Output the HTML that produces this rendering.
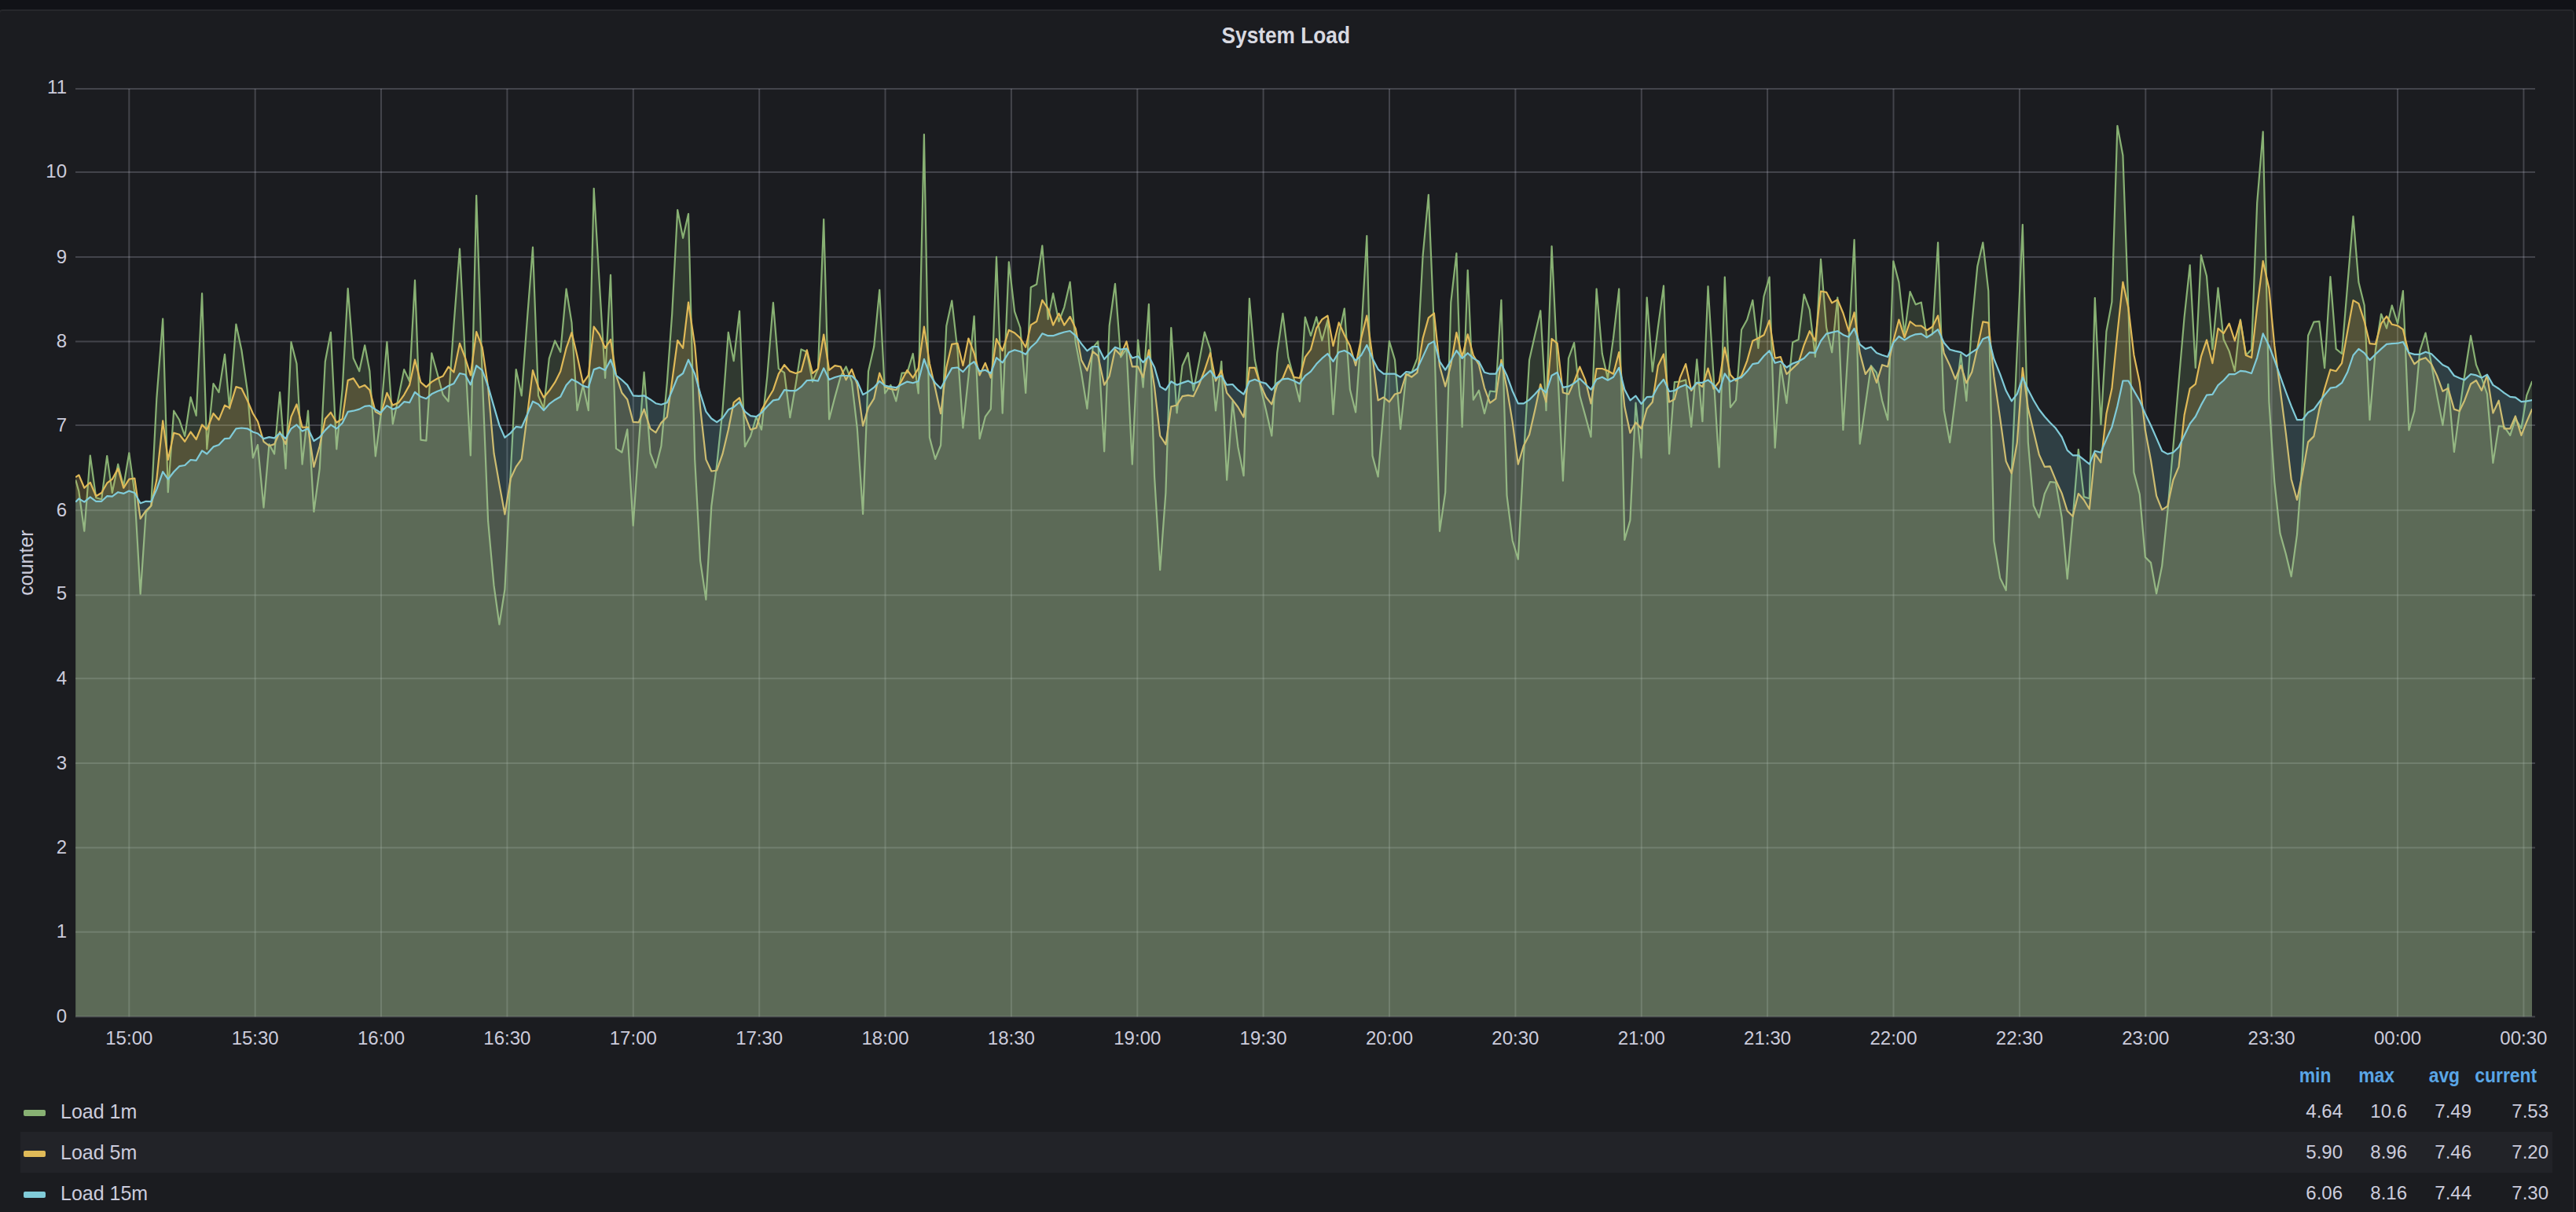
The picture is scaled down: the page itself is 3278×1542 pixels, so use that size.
<!DOCTYPE html><html><head><meta charset="utf-8"><style>
html,body{margin:0;padding:0;width:3278px;height:1542px;overflow:hidden;background:#111217;font-family:"Liberation Sans",sans-serif}
#panel{position:absolute;left:-2px;top:12px;width:3278px;height:1540px;background:#1b1c20;border:2px solid #26272b;box-sizing:border-box;border-radius:5px 5px 0 0;border-bottom:none}
.abs{position:absolute}
#title{position:absolute;left:-3px;width:3278px;top:28px;text-align:center;color:#d8d9e0;font-size:29px;font-weight:bold;line-height:34px}
.yl{position:absolute;left:0;width:85px;text-align:right;color:#ccccdc;font-size:24px;line-height:28px}
.xl{position:absolute;top:1307px;width:120px;text-align:center;color:#ccccdc;font-size:24px;line-height:28px}
#ylab{position:absolute;left:32.5px;top:715.5px;color:#ccccdc;font-size:25px;line-height:28px;transform:translate(-50%,-50%) rotate(-90deg);white-space:nowrap}
.li{position:absolute;left:30px;width:28px;height:8px;border-radius:2px}
.ln{position:absolute;left:77px;height:52px;line-height:52px;color:#ccccdc;font-size:25px;white-space:nowrap}
.lv{position:absolute;width:200px;text-align:right;height:52px;line-height:52px;color:#ccccdc;font-size:24px}
.lh{position:absolute;top:1351px;width:200px;text-align:right;line-height:34px;color:#5aa6e6;font-size:25px;font-weight:bold}
svg{position:absolute;left:0;top:0}
</style></head><body>
<div id="panel"></div>
<div id="title"><span style="display:inline-block;transform:scaleX(0.905)">System Load</span></div>
<svg width="3278" height="1542" viewBox="0 0 3278 1542">
<defs><clipPath id="cp"><rect x="96" y="0" width="3126" height="1293.6"/></clipPath></defs>
<g stroke="#ccccdc" stroke-opacity="0.23" stroke-width="2"><line x1="96" y1="1293.6" x2="3226" y2="1293.6" /><line x1="96" y1="1185.8" x2="3226" y2="1185.8" /><line x1="96" y1="1078.5" x2="3226" y2="1078.5" /><line x1="96" y1="971.0" x2="3226" y2="971.0" /><line x1="96" y1="863.3" x2="3226" y2="863.3" /><line x1="96" y1="757.2" x2="3226" y2="757.2" /><line x1="96" y1="649.2" x2="3226" y2="649.2" /><line x1="96" y1="541.1" x2="3226" y2="541.1" /><line x1="96" y1="434.6" x2="3226" y2="434.6" /><line x1="96" y1="327.0" x2="3226" y2="327.0" /><line x1="96" y1="218.9" x2="3226" y2="218.9" /><line x1="96" y1="113.0" x2="3226" y2="113.0" /><line x1="164.3" y1="113.0" x2="164.3" y2="1293.6" /><line x1="324.7" y1="113.0" x2="324.7" y2="1293.6" /><line x1="485.0" y1="113.0" x2="485.0" y2="1293.6" /><line x1="645.4" y1="113.0" x2="645.4" y2="1293.6" /><line x1="805.8" y1="113.0" x2="805.8" y2="1293.6" /><line x1="966.2" y1="113.0" x2="966.2" y2="1293.6" /><line x1="1126.5" y1="113.0" x2="1126.5" y2="1293.6" /><line x1="1286.9" y1="113.0" x2="1286.9" y2="1293.6" /><line x1="1447.3" y1="113.0" x2="1447.3" y2="1293.6" /><line x1="1607.6" y1="113.0" x2="1607.6" y2="1293.6" /><line x1="1768.0" y1="113.0" x2="1768.0" y2="1293.6" /><line x1="1928.4" y1="113.0" x2="1928.4" y2="1293.6" /><line x1="2088.8" y1="113.0" x2="2088.8" y2="1293.6" /><line x1="2249.1" y1="113.0" x2="2249.1" y2="1293.6" /><line x1="2409.5" y1="113.0" x2="2409.5" y2="1293.6" /><line x1="2569.9" y1="113.0" x2="2569.9" y2="1293.6" /><line x1="2730.3" y1="113.0" x2="2730.3" y2="1293.6" /><line x1="2890.6" y1="113.0" x2="2890.6" y2="1293.6" /><line x1="3051.0" y1="113.0" x2="3051.0" y2="1293.6" /><line x1="3211.4" y1="113.0" x2="3211.4" y2="1293.6" /></g>
<g clip-path="url(#cp)"><path d="M96.2,1293.6 L96.2,610.5 L100.3,625.0 L107.3,675.7 L114.8,579.6 L122.2,633.2 L129.2,635.3 L136.2,580.0 L142.8,627.0 L150.2,590.7 L157.2,618.8 L164.3,576.3 L171.3,627.0 L178.7,755.7 L185.7,651.8 L192.3,643.5 L199.3,507.4 L207.2,405.5 L213.8,626.2 L221.2,522.7 L228.2,534.2 L235.2,554.8 L242.6,505.3 L249.7,528.8 L257.1,373.3 L263.3,571.3 L271.5,488.0 L278.5,499.1 L286.0,450.9 L292.1,519.8 L300.4,412.5 L307.4,445.5 L314.8,497.1 L321.8,582.5 L328.0,566.0 L335.5,645.6 L342.5,565.1 L349.1,577.5 L356.1,499.1 L363.5,596.1 L370.5,435.2 L377.5,462.8 L384.6,590.7 L392.0,522.7 L399.4,651.0 L406.8,596.1 L413.8,460.0 L420.9,422.8 L428.3,571.3 L435.7,495.0 L442.7,367.1 L449.7,455.8 L457.2,472.3 L464.2,439.3 L470.4,472.3 L477.8,580.4 L484.5,529.0 L492.4,435.0 L499.8,539.4 L507.2,504.8 L514.2,470.1 L521.1,485.0 L528.0,356.7 L535.4,559.7 L542.4,560.7 L549.3,449.3 L556.7,476.0 L563.7,502.3 L570.6,510.7 L577.5,413.2 L585.0,316.6 L591.9,452.8 L598.8,579.5 L606.2,248.8 L613.7,477.5 L621.1,663.2 L628.5,744.9 L635.4,794.4 L642.4,749.8 L649.8,601.3 L656.7,470.1 L663.7,503.3 L671.1,403.3 L678.0,314.7 L685.0,503.3 L691.9,519.6 L698.8,456.2 L706.2,433.5 L713.2,447.8 L720.6,367.6 L727.5,410.7 L734.5,522.1 L741.9,489.9 L748.8,522.1 L755.7,239.9 L762.7,358.7 L770.1,481.0 L777.0,349.8 L784.0,570.6 L791.4,575.5 L798.3,546.3 L805.7,668.6 L812.7,566.6 L819.6,473.6 L827.5,576.5 L834.5,594.9 L841.4,567.6 L848.8,487.4 L855.2,399.8 L862.2,267.1 L869.1,302.8 L876.0,272.1 L884.2,584.6 L891.1,713.3 L898.4,762.8 L905.3,644.0 L912.2,591.2 L919.5,521.9 L926.8,422.9 L933.7,459.2 L941.0,395.8 L947.9,568.1 L955.1,554.9 L962.4,530.2 L969.0,546.7 L976.3,479.0 L983.9,385.0 L990.8,469.1 L998.1,474.1 L1005.3,531.2 L1012.6,488.9 L1019.5,444.4 L1026.8,447.7 L1034.0,485.6 L1041.0,469.1 L1048.2,279.0 L1055.1,533.5 L1062.4,505.4 L1069.7,479.0 L1076.6,466.5 L1083.9,485.6 L1090.8,545.0 L1098.1,653.9 L1105.0,472.4 L1112.2,441.1 L1119.2,368.8 L1126.1,500.5 L1133.4,489.9 L1140.3,510.4 L1147.6,474.7 L1154.5,474.1 L1161.7,450.0 L1168.7,500.5 L1175.9,171.1 L1182.9,556.6 L1190.1,584.0 L1197.1,566.5 L1204.3,414.7 L1211.3,382.6 L1218.5,446.0 L1225.4,544.4 L1232.4,479.0 L1239.6,402.4 L1246.6,558.2 L1253.8,530.2 L1260.8,520.3 L1268.0,326.9 L1275.7,525.6 L1283.8,333.4 L1291.1,396.3 L1298.3,417.0 L1305.2,499.9 L1311.8,365.4 L1319.1,361.8 L1326.3,312.7 L1333.6,406.1 L1340.1,373.4 L1347.4,409.0 L1354.3,390.8 L1361.6,358.9 L1368.8,436.3 L1376.1,474.4 L1383.4,519.8 L1390.6,442.4 L1397.2,434.4 L1405.2,574.3 L1411.7,414.5 L1419.0,361.0 L1426.2,454.4 L1433.5,443.5 L1440.8,590.7 L1448.1,432.6 L1454.6,492.6 L1461.9,387.2 L1469.1,607.0 L1476.2,725.1 L1483.4,627.0 L1490.3,417.0 L1497.6,525.3 L1504.5,465.3 L1511.8,449.0 L1518.7,496.9 L1526.0,459.9 L1532.9,422.5 L1540.1,444.3 L1547.0,522.4 L1554.3,459.9 L1561.2,610.7 L1568.5,510.8 L1575.4,568.9 L1582.6,605.2 L1589.9,379.9 L1596.8,458.1 L1604.1,492.6 L1611.0,521.7 L1618.3,554.4 L1625.2,449.0 L1632.4,398.8 L1639.3,454.4 L1646.6,481.7 L1653.9,510.8 L1660.8,403.6 L1668.0,427.2 L1675.2,403.4 L1682.3,433.3 L1689.4,407.2 L1696.5,527.2 L1703.7,426.2 L1710.8,392.5 L1717.9,495.5 L1725.1,524.5 L1732.2,424.2 L1739.3,300.2 L1746.5,579.9 L1753.6,606.5 L1760.7,520.5 L1767.9,434.1 L1775.0,457.9 L1782.1,545.9 L1789.3,477.7 L1796.4,473.8 L1803.5,455.9 L1810.6,325.2 L1817.8,247.9 L1824.9,418.3 L1832.0,675.8 L1839.2,626.3 L1846.3,384.6 L1853.4,322.4 L1860.6,543.1 L1867.7,343.8 L1874.8,508.6 L1881.9,496.7 L1889.0,526.1 L1896.1,497.5 L1903.3,498.3 L1910.4,381.8 L1917.5,630.3 L1924.7,687.7 L1931.8,711.5 L1938.9,580.7 L1946.1,457.9 L1953.2,426.2 L1960.3,395.3 L1967.5,522.1 L1974.6,313.3 L1981.7,461.9 L1988.9,611.6 L1996.0,455.9 L2003.1,436.1 L2010.3,503.5 L2017.4,529.2 L2024.5,555.8 L2031.6,367.6 L2038.8,450.0 L2045.9,481.7 L2053.0,430.2 L2060.2,367.6 L2067.3,686.9 L2074.4,662.0 L2081.5,512.5 L2088.6,582.5 L2095.7,378.6 L2102.8,472.6 L2109.9,415.8 L2117.0,363.7 L2124.1,577.5 L2130.9,486.1 L2138.0,485.5 L2145.1,483.4 L2152.2,543.0 L2159.3,457.4 L2166.4,536.2 L2173.5,364.4 L2180.6,479.4 L2187.7,594.4 L2194.8,352.6 L2201.9,518.3 L2209.0,509.1 L2216.1,419.5 L2223.2,406.7 L2230.3,382.0 L2237.4,442.9 L2244.5,377.3 L2251.6,352.6 L2258.7,569.7 L2265.8,464.2 L2273.5,512.9 L2281.2,435.4 L2288.6,432.0 L2295.7,374.5 L2302.8,394.2 L2309.9,454.0 L2317.0,329.9 L2324.1,416.8 L2331.2,448.3 L2338.3,378.6 L2345.4,547.0 L2352.5,432.0 L2359.6,305.2 L2366.7,564.6 L2373.8,514.9 L2380.9,465.2 L2388.0,474.3 L2395.1,509.8 L2402.2,534.2 L2409.3,332.3 L2416.4,359.3 L2423.5,424.6 L2430.6,371.2 L2437.7,387.4 L2444.8,384.7 L2451.9,428.7 L2459.0,425.3 L2466.1,308.6 L2473.7,521.9 L2481.2,562.8 L2488.2,507.0 L2495.2,450.9 L2502.3,509.8 L2509.3,411.6 L2516.3,338.7 L2523.3,308.6 L2530.3,370.4 L2537.3,688.4 L2545.2,735.6 L2552.7,751.0 L2559.8,602.3 L2566.8,445.2 L2573.8,285.9 L2580.8,562.8 L2587.8,643.3 L2594.8,658.4 L2601.8,628.1 L2608.8,613.0 L2615.9,613.8 L2623.7,658.4 L2630.7,736.4 L2637.7,658.4 L2644.8,571.8 L2651.8,632.1 L2658.8,634.3 L2665.8,379.0 L2673.4,540.1 L2680.4,421.7 L2687.4,384.1 L2694.4,160.0 L2701.4,197.8 L2708.4,391.7 L2715.4,600.9 L2722.8,629.0 L2729.9,708.9 L2737.0,715.9 L2744.1,755.2 L2751.2,720.1 L2758.3,650.9 L2765.4,568.7 L2772.5,485.9 L2779.6,403.5 L2786.7,337.3 L2793.8,468.0 L2800.9,324.6 L2808.0,351.3 L2815.4,444.4 L2822.5,366.4 L2829.6,431.8 L2836.7,446.9 L2843.8,472.2 L2850.9,406.5 L2858.0,452.0 L2865.1,444.4 L2872.2,258.1 L2879.7,167.7 L2887.4,511.1 L2894.3,613.3 L2901.5,678.8 L2908.8,704.7 L2915.7,733.4 L2923.0,680.1 L2929.8,587.5 L2937.1,427.0 L2944.4,409.6 L2951.3,408.8 L2958.1,468.2 L2965.4,352.2 L2972.7,443.9 L2980.0,450.0 L2987.2,363.1 L2994.5,275.4 L3001.4,359.0 L3008.7,388.6 L3015.5,534.1 L3022.8,446.0 L3030.1,399.5 L3037.0,417.7 L3043.8,388.6 L3051.1,411.6 L3057.9,370.1 L3065.4,547.3 L3072.4,522.6 L3079.3,446.3 L3086.6,423.6 L3094.0,463.2 L3101.1,502.8 L3108.4,540.8 L3115.3,488.9 L3122.9,575.0 L3129.8,522.6 L3136.1,478.0 L3144.1,427.1 L3151.0,464.2 L3157.9,481.0 L3164.9,501.2 L3172.4,588.9 L3179.7,542.0 L3186.6,542.8 L3194.2,553.9 L3200.9,532.9 L3208.4,544.8 L3215.3,502.8 L3222.3,485.0 L3222.3,1293.6 Z" fill="#88b173" fill-opacity="0.2" /><path d="M96.2,610.5 L100.3,625.0 L107.3,675.7 L114.8,579.6 L122.2,633.2 L129.2,635.3 L136.2,580.0 L142.8,627.0 L150.2,590.7 L157.2,618.8 L164.3,576.3 L171.3,627.0 L178.7,755.7 L185.7,651.8 L192.3,643.5 L199.3,507.4 L207.2,405.5 L213.8,626.2 L221.2,522.7 L228.2,534.2 L235.2,554.8 L242.6,505.3 L249.7,528.8 L257.1,373.3 L263.3,571.3 L271.5,488.0 L278.5,499.1 L286.0,450.9 L292.1,519.8 L300.4,412.5 L307.4,445.5 L314.8,497.1 L321.8,582.5 L328.0,566.0 L335.5,645.6 L342.5,565.1 L349.1,577.5 L356.1,499.1 L363.5,596.1 L370.5,435.2 L377.5,462.8 L384.6,590.7 L392.0,522.7 L399.4,651.0 L406.8,596.1 L413.8,460.0 L420.9,422.8 L428.3,571.3 L435.7,495.0 L442.7,367.1 L449.7,455.8 L457.2,472.3 L464.2,439.3 L470.4,472.3 L477.8,580.4 L484.5,529.0 L492.4,435.0 L499.8,539.4 L507.2,504.8 L514.2,470.1 L521.1,485.0 L528.0,356.7 L535.4,559.7 L542.4,560.7 L549.3,449.3 L556.7,476.0 L563.7,502.3 L570.6,510.7 L577.5,413.2 L585.0,316.6 L591.9,452.8 L598.8,579.5 L606.2,248.8 L613.7,477.5 L621.1,663.2 L628.5,744.9 L635.4,794.4 L642.4,749.8 L649.8,601.3 L656.7,470.1 L663.7,503.3 L671.1,403.3 L678.0,314.7 L685.0,503.3 L691.9,519.6 L698.8,456.2 L706.2,433.5 L713.2,447.8 L720.6,367.6 L727.5,410.7 L734.5,522.1 L741.9,489.9 L748.8,522.1 L755.7,239.9 L762.7,358.7 L770.1,481.0 L777.0,349.8 L784.0,570.6 L791.4,575.5 L798.3,546.3 L805.7,668.6 L812.7,566.6 L819.6,473.6 L827.5,576.5 L834.5,594.9 L841.4,567.6 L848.8,487.4 L855.2,399.8 L862.2,267.1 L869.1,302.8 L876.0,272.1 L884.2,584.6 L891.1,713.3 L898.4,762.8 L905.3,644.0 L912.2,591.2 L919.5,521.9 L926.8,422.9 L933.7,459.2 L941.0,395.8 L947.9,568.1 L955.1,554.9 L962.4,530.2 L969.0,546.7 L976.3,479.0 L983.9,385.0 L990.8,469.1 L998.1,474.1 L1005.3,531.2 L1012.6,488.9 L1019.5,444.4 L1026.8,447.7 L1034.0,485.6 L1041.0,469.1 L1048.2,279.0 L1055.1,533.5 L1062.4,505.4 L1069.7,479.0 L1076.6,466.5 L1083.9,485.6 L1090.8,545.0 L1098.1,653.9 L1105.0,472.4 L1112.2,441.1 L1119.2,368.8 L1126.1,500.5 L1133.4,489.9 L1140.3,510.4 L1147.6,474.7 L1154.5,474.1 L1161.7,450.0 L1168.7,500.5 L1175.9,171.1 L1182.9,556.6 L1190.1,584.0 L1197.1,566.5 L1204.3,414.7 L1211.3,382.6 L1218.5,446.0 L1225.4,544.4 L1232.4,479.0 L1239.6,402.4 L1246.6,558.2 L1253.8,530.2 L1260.8,520.3 L1268.0,326.9 L1275.7,525.6 L1283.8,333.4 L1291.1,396.3 L1298.3,417.0 L1305.2,499.9 L1311.8,365.4 L1319.1,361.8 L1326.3,312.7 L1333.6,406.1 L1340.1,373.4 L1347.4,409.0 L1354.3,390.8 L1361.6,358.9 L1368.8,436.3 L1376.1,474.4 L1383.4,519.8 L1390.6,442.4 L1397.2,434.4 L1405.2,574.3 L1411.7,414.5 L1419.0,361.0 L1426.2,454.4 L1433.5,443.5 L1440.8,590.7 L1448.1,432.6 L1454.6,492.6 L1461.9,387.2 L1469.1,607.0 L1476.2,725.1 L1483.4,627.0 L1490.3,417.0 L1497.6,525.3 L1504.5,465.3 L1511.8,449.0 L1518.7,496.9 L1526.0,459.9 L1532.9,422.5 L1540.1,444.3 L1547.0,522.4 L1554.3,459.9 L1561.2,610.7 L1568.5,510.8 L1575.4,568.9 L1582.6,605.2 L1589.9,379.9 L1596.8,458.1 L1604.1,492.6 L1611.0,521.7 L1618.3,554.4 L1625.2,449.0 L1632.4,398.8 L1639.3,454.4 L1646.6,481.7 L1653.9,510.8 L1660.8,403.6 L1668.0,427.2 L1675.2,403.4 L1682.3,433.3 L1689.4,407.2 L1696.5,527.2 L1703.7,426.2 L1710.8,392.5 L1717.9,495.5 L1725.1,524.5 L1732.2,424.2 L1739.3,300.2 L1746.5,579.9 L1753.6,606.5 L1760.7,520.5 L1767.9,434.1 L1775.0,457.9 L1782.1,545.9 L1789.3,477.7 L1796.4,473.8 L1803.5,455.9 L1810.6,325.2 L1817.8,247.9 L1824.9,418.3 L1832.0,675.8 L1839.2,626.3 L1846.3,384.6 L1853.4,322.4 L1860.6,543.1 L1867.7,343.8 L1874.8,508.6 L1881.9,496.7 L1889.0,526.1 L1896.1,497.5 L1903.3,498.3 L1910.4,381.8 L1917.5,630.3 L1924.7,687.7 L1931.8,711.5 L1938.9,580.7 L1946.1,457.9 L1953.2,426.2 L1960.3,395.3 L1967.5,522.1 L1974.6,313.3 L1981.7,461.9 L1988.9,611.6 L1996.0,455.9 L2003.1,436.1 L2010.3,503.5 L2017.4,529.2 L2024.5,555.8 L2031.6,367.6 L2038.8,450.0 L2045.9,481.7 L2053.0,430.2 L2060.2,367.6 L2067.3,686.9 L2074.4,662.0 L2081.5,512.5 L2088.6,582.5 L2095.7,378.6 L2102.8,472.6 L2109.9,415.8 L2117.0,363.7 L2124.1,577.5 L2130.9,486.1 L2138.0,485.5 L2145.1,483.4 L2152.2,543.0 L2159.3,457.4 L2166.4,536.2 L2173.5,364.4 L2180.6,479.4 L2187.7,594.4 L2194.8,352.6 L2201.9,518.3 L2209.0,509.1 L2216.1,419.5 L2223.2,406.7 L2230.3,382.0 L2237.4,442.9 L2244.5,377.3 L2251.6,352.6 L2258.7,569.7 L2265.8,464.2 L2273.5,512.9 L2281.2,435.4 L2288.6,432.0 L2295.7,374.5 L2302.8,394.2 L2309.9,454.0 L2317.0,329.9 L2324.1,416.8 L2331.2,448.3 L2338.3,378.6 L2345.4,547.0 L2352.5,432.0 L2359.6,305.2 L2366.7,564.6 L2373.8,514.9 L2380.9,465.2 L2388.0,474.3 L2395.1,509.8 L2402.2,534.2 L2409.3,332.3 L2416.4,359.3 L2423.5,424.6 L2430.6,371.2 L2437.7,387.4 L2444.8,384.7 L2451.9,428.7 L2459.0,425.3 L2466.1,308.6 L2473.7,521.9 L2481.2,562.8 L2488.2,507.0 L2495.2,450.9 L2502.3,509.8 L2509.3,411.6 L2516.3,338.7 L2523.3,308.6 L2530.3,370.4 L2537.3,688.4 L2545.2,735.6 L2552.7,751.0 L2559.8,602.3 L2566.8,445.2 L2573.8,285.9 L2580.8,562.8 L2587.8,643.3 L2594.8,658.4 L2601.8,628.1 L2608.8,613.0 L2615.9,613.8 L2623.7,658.4 L2630.7,736.4 L2637.7,658.4 L2644.8,571.8 L2651.8,632.1 L2658.8,634.3 L2665.8,379.0 L2673.4,540.1 L2680.4,421.7 L2687.4,384.1 L2694.4,160.0 L2701.4,197.8 L2708.4,391.7 L2715.4,600.9 L2722.8,629.0 L2729.9,708.9 L2737.0,715.9 L2744.1,755.2 L2751.2,720.1 L2758.3,650.9 L2765.4,568.7 L2772.5,485.9 L2779.6,403.5 L2786.7,337.3 L2793.8,468.0 L2800.9,324.6 L2808.0,351.3 L2815.4,444.4 L2822.5,366.4 L2829.6,431.8 L2836.7,446.9 L2843.8,472.2 L2850.9,406.5 L2858.0,452.0 L2865.1,444.4 L2872.2,258.1 L2879.7,167.7 L2887.4,511.1 L2894.3,613.3 L2901.5,678.8 L2908.8,704.7 L2915.7,733.4 L2923.0,680.1 L2929.8,587.5 L2937.1,427.0 L2944.4,409.6 L2951.3,408.8 L2958.1,468.2 L2965.4,352.2 L2972.7,443.9 L2980.0,450.0 L2987.2,363.1 L2994.5,275.4 L3001.4,359.0 L3008.7,388.6 L3015.5,534.1 L3022.8,446.0 L3030.1,399.5 L3037.0,417.7 L3043.8,388.6 L3051.1,411.6 L3057.9,370.1 L3065.4,547.3 L3072.4,522.6 L3079.3,446.3 L3086.6,423.6 L3094.0,463.2 L3101.1,502.8 L3108.4,540.8 L3115.3,488.9 L3122.9,575.0 L3129.8,522.6 L3136.1,478.0 L3144.1,427.1 L3151.0,464.2 L3157.9,481.0 L3164.9,501.2 L3172.4,588.9 L3179.7,542.0 L3186.6,542.8 L3194.2,553.9 L3200.9,532.9 L3208.4,544.8 L3215.3,502.8 L3222.3,485.0" fill="none" stroke="#88b173" stroke-width="2.2" stroke-linejoin="round" /><path d="M96.2,1293.6 L96.2,607.2 L100.3,604.3 L107.3,620.8 L114.8,613.8 L122.2,631.2 L129.2,627.0 L136.2,614.7 L142.8,609.7 L150.2,596.1 L157.2,620.8 L164.3,609.7 L171.3,608.5 L178.7,660.0 L185.7,649.7 L192.3,643.5 L199.3,610.5 L207.2,535.4 L213.8,585.0 L221.2,550.7 L228.2,552.8 L235.2,561.8 L242.6,549.5 L249.7,559.0 L257.1,540.4 L263.3,546.6 L271.5,526.0 L278.5,534.2 L286.0,515.6 L292.1,518.9 L300.4,492.1 L307.4,494.2 L314.8,509.5 L321.8,526.0 L328.0,536.3 L335.5,561.8 L342.5,567.2 L349.1,565.1 L356.1,549.5 L363.5,565.1 L370.5,530.1 L377.5,514.4 L384.6,543.7 L392.0,543.7 L399.4,594.0 L406.8,567.2 L413.8,533.0 L420.9,524.7 L428.3,537.5 L435.7,533.0 L442.7,483.9 L449.7,481.4 L457.2,493.0 L464.2,490.1 L470.4,496.3 L477.8,523.9 L484.5,527.5 L492.4,499.8 L499.8,515.6 L507.2,512.2 L514.2,502.3 L521.1,489.9 L528.0,457.7 L535.4,486.4 L542.4,492.4 L549.3,485.9 L556.7,481.5 L563.7,478.5 L570.6,466.6 L577.5,473.6 L585.0,436.9 L591.9,455.2 L598.8,477.5 L606.2,422.1 L613.7,441.9 L621.1,492.4 L628.5,576.5 L635.4,616.1 L642.4,654.3 L649.8,608.7 L656.7,593.9 L663.7,584.0 L671.1,527.0 L678.0,471.1 L685.0,492.4 L691.9,505.7 L698.8,497.3 L706.2,486.4 L713.2,472.6 L720.6,442.9 L727.5,423.1 L734.5,452.8 L741.9,487.4 L748.8,477.5 L755.7,415.6 L762.7,425.5 L770.1,442.9 L777.0,432.0 L784.0,477.5 L791.4,499.8 L798.3,508.2 L805.7,536.9 L812.7,537.4 L819.6,520.6 L827.5,545.3 L834.5,550.3 L841.4,537.9 L848.8,530.5 L855.2,485.0 L862.2,433.0 L869.1,442.9 L876.0,384.5 L884.2,439.4 L891.1,518.6 L898.4,584.6 L905.3,599.5 L912.2,598.5 L919.5,577.4 L926.8,546.7 L933.7,512.0 L941.0,506.1 L947.9,528.5 L955.1,546.7 L962.4,544.4 L969.0,521.9 L976.3,508.7 L983.9,496.2 L990.8,475.7 L998.1,464.2 L1005.3,472.4 L1012.6,475.0 L1019.5,472.4 L1026.8,445.3 L1034.0,475.0 L1041.0,469.1 L1048.2,425.5 L1055.1,470.8 L1062.4,465.1 L1069.7,466.5 L1076.6,483.3 L1083.9,469.8 L1090.8,488.9 L1098.1,541.7 L1105.0,518.6 L1112.2,507.1 L1119.2,474.7 L1126.1,492.2 L1133.4,494.9 L1140.3,496.2 L1147.6,484.0 L1154.5,470.8 L1161.7,480.7 L1168.7,468.4 L1175.9,415.6 L1182.9,462.5 L1190.1,493.9 L1197.1,526.2 L1204.3,467.5 L1211.3,437.8 L1218.5,436.8 L1225.4,465.1 L1232.4,430.5 L1239.6,449.3 L1246.6,477.4 L1253.8,461.8 L1260.8,480.7 L1268.0,431.2 L1275.7,446.2 L1283.8,419.9 L1291.1,423.5 L1298.3,430.1 L1305.2,441.7 L1311.8,413.4 L1319.1,409.0 L1326.3,381.8 L1333.6,392.7 L1340.1,413.7 L1347.4,398.8 L1354.3,413.7 L1361.6,402.8 L1368.8,418.1 L1376.1,458.1 L1383.4,471.5 L1390.6,447.2 L1397.2,452.6 L1405.2,489.7 L1411.7,478.8 L1419.0,444.6 L1426.2,451.9 L1433.5,434.4 L1440.8,466.4 L1448.1,466.4 L1454.6,479.9 L1461.9,445.3 L1469.1,492.6 L1476.2,554.4 L1483.4,565.3 L1490.3,517.3 L1497.6,515.5 L1504.5,504.2 L1511.8,502.8 L1518.7,504.2 L1526.0,489.0 L1532.9,470.8 L1540.1,449.0 L1547.0,484.6 L1554.3,471.5 L1561.2,499.9 L1568.5,508.9 L1575.4,518.0 L1582.6,530.7 L1589.9,467.9 L1596.8,467.9 L1604.1,489.7 L1611.0,505.3 L1618.3,514.4 L1625.2,489.7 L1632.4,481.0 L1639.3,464.2 L1646.6,479.9 L1653.9,481.0 L1660.8,454.4 L1668.0,444.6 L1675.2,417.5 L1682.3,406.4 L1689.4,401.6 L1696.5,440.1 L1703.7,410.4 L1710.8,426.2 L1717.9,440.1 L1725.1,465.0 L1732.2,430.2 L1739.3,401.6 L1746.5,453.9 L1753.6,509.4 L1760.7,505.5 L1767.9,511.4 L1775.0,501.5 L1782.1,499.5 L1789.3,475.7 L1796.4,479.7 L1803.5,473.8 L1810.6,430.2 L1817.8,404.4 L1824.9,398.5 L1832.0,465.8 L1839.2,491.6 L1846.3,463.9 L1853.4,423.0 L1860.6,453.9 L1867.7,425.4 L1874.8,452.0 L1881.9,463.9 L1889.0,493.6 L1896.1,512.6 L1903.3,507.4 L1910.4,457.9 L1917.5,493.6 L1924.7,537.1 L1931.8,590.6 L1938.9,566.9 L1946.1,553.0 L1953.2,522.1 L1960.3,488.8 L1967.5,511.4 L1974.6,431.0 L1981.7,436.9 L1988.9,499.5 L1996.0,501.5 L2003.1,485.6 L2010.3,466.6 L2017.4,483.7 L2024.5,513.4 L2031.6,469.0 L2038.8,469.0 L2045.9,471.8 L2053.0,475.7 L2060.2,448.0 L2067.3,517.3 L2074.4,550.7 L2081.5,537.5 L2088.6,545.3 L2095.7,520.0 L2102.8,511.5 L2109.9,465.2 L2117.0,450.6 L2124.1,511.5 L2130.9,508.1 L2138.0,480.1 L2145.1,463.1 L2152.2,497.0 L2159.3,486.8 L2166.4,492.2 L2173.5,468.6 L2180.6,494.6 L2187.7,485.5 L2194.8,442.2 L2201.9,476.7 L2209.0,484.5 L2216.1,477.7 L2223.2,459.1 L2230.3,433.7 L2237.4,430.3 L2244.5,426.3 L2251.6,407.7 L2258.7,455.7 L2265.8,454.0 L2273.5,476.0 L2281.2,468.6 L2288.6,461.8 L2295.7,438.8 L2302.8,421.2 L2309.9,433.7 L2317.0,370.5 L2324.1,371.8 L2331.2,385.4 L2338.3,381.3 L2345.4,398.2 L2352.5,421.2 L2359.6,397.5 L2366.7,448.9 L2373.8,476.0 L2380.9,466.5 L2388.0,486.8 L2395.1,464.2 L2402.2,466.5 L2409.3,433.7 L2416.4,406.7 L2423.5,429.3 L2430.6,409.0 L2437.7,414.5 L2444.8,414.5 L2451.9,420.2 L2459.0,415.8 L2466.1,401.6 L2473.7,449.2 L2481.2,464.9 L2488.2,482.3 L2495.2,464.9 L2502.3,487.3 L2509.3,473.3 L2516.3,442.4 L2523.3,409.3 L2530.3,410.7 L2537.3,478.9 L2545.2,532.2 L2552.7,586.9 L2559.8,602.3 L2566.8,563.1 L2573.8,468.2 L2580.8,519.6 L2587.8,549.0 L2594.8,578.5 L2601.8,593.9 L2608.8,593.4 L2615.9,610.7 L2623.7,627.6 L2630.7,650.0 L2637.7,657.0 L2644.8,628.1 L2651.8,636.0 L2658.8,647.8 L2665.8,577.1 L2673.4,588.3 L2680.4,526.6 L2687.4,494.3 L2694.4,424.2 L2701.4,358.8 L2708.4,391.7 L2715.4,451.4 L2722.8,486.8 L2729.9,547.6 L2737.0,585.5 L2744.1,630.9 L2751.2,648.6 L2758.3,643.8 L2765.4,610.7 L2772.5,593.9 L2779.6,528.0 L2786.7,494.3 L2793.8,488.7 L2800.9,453.7 L2808.0,432.6 L2815.4,462.1 L2822.5,417.8 L2829.6,424.2 L2836.7,411.6 L2843.8,433.5 L2850.9,407.7 L2858.0,452.0 L2865.1,455.1 L2872.2,391.7 L2879.7,332.2 L2887.4,367.1 L2894.3,439.9 L2901.5,494.5 L2908.8,551.1 L2915.7,609.7 L2923.0,636.0 L2929.8,603.6 L2937.1,562.4 L2944.4,555.1 L2951.3,520.8 L2958.1,494.5 L2965.4,470.2 L2972.7,472.2 L2980.0,462.1 L2987.2,421.7 L2994.5,382.1 L3001.4,386.1 L3008.7,408.8 L3015.5,437.1 L3022.8,437.9 L3030.1,411.6 L3037.0,402.3 L3043.8,412.8 L3051.1,414.4 L3057.9,419.2 L3065.4,450.3 L3072.4,463.2 L3079.3,457.6 L3086.6,455.2 L3094.0,463.2 L3101.1,478.0 L3108.4,497.8 L3115.3,493.9 L3122.9,520.6 L3129.8,523.0 L3136.1,509.7 L3144.1,488.5 L3151.0,484.0 L3157.9,496.8 L3164.9,477.4 L3172.4,525.5 L3179.7,509.7 L3186.6,545.3 L3194.2,545.3 L3200.9,529.5 L3208.4,553.9 L3215.3,536.4 L3222.3,520.2 L3222.3,1293.6 Z" fill="#e0ba58" fill-opacity="0.2" /><path d="M96.2,607.2 L100.3,604.3 L107.3,620.8 L114.8,613.8 L122.2,631.2 L129.2,627.0 L136.2,614.7 L142.8,609.7 L150.2,596.1 L157.2,620.8 L164.3,609.7 L171.3,608.5 L178.7,660.0 L185.7,649.7 L192.3,643.5 L199.3,610.5 L207.2,535.4 L213.8,585.0 L221.2,550.7 L228.2,552.8 L235.2,561.8 L242.6,549.5 L249.7,559.0 L257.1,540.4 L263.3,546.6 L271.5,526.0 L278.5,534.2 L286.0,515.6 L292.1,518.9 L300.4,492.1 L307.4,494.2 L314.8,509.5 L321.8,526.0 L328.0,536.3 L335.5,561.8 L342.5,567.2 L349.1,565.1 L356.1,549.5 L363.5,565.1 L370.5,530.1 L377.5,514.4 L384.6,543.7 L392.0,543.7 L399.4,594.0 L406.8,567.2 L413.8,533.0 L420.9,524.7 L428.3,537.5 L435.7,533.0 L442.7,483.9 L449.7,481.4 L457.2,493.0 L464.2,490.1 L470.4,496.3 L477.8,523.9 L484.5,527.5 L492.4,499.8 L499.8,515.6 L507.2,512.2 L514.2,502.3 L521.1,489.9 L528.0,457.7 L535.4,486.4 L542.4,492.4 L549.3,485.9 L556.7,481.5 L563.7,478.5 L570.6,466.6 L577.5,473.6 L585.0,436.9 L591.9,455.2 L598.8,477.5 L606.2,422.1 L613.7,441.9 L621.1,492.4 L628.5,576.5 L635.4,616.1 L642.4,654.3 L649.8,608.7 L656.7,593.9 L663.7,584.0 L671.1,527.0 L678.0,471.1 L685.0,492.4 L691.9,505.7 L698.8,497.3 L706.2,486.4 L713.2,472.6 L720.6,442.9 L727.5,423.1 L734.5,452.8 L741.9,487.4 L748.8,477.5 L755.7,415.6 L762.7,425.5 L770.1,442.9 L777.0,432.0 L784.0,477.5 L791.4,499.8 L798.3,508.2 L805.7,536.9 L812.7,537.4 L819.6,520.6 L827.5,545.3 L834.5,550.3 L841.4,537.9 L848.8,530.5 L855.2,485.0 L862.2,433.0 L869.1,442.9 L876.0,384.5 L884.2,439.4 L891.1,518.6 L898.4,584.6 L905.3,599.5 L912.2,598.5 L919.5,577.4 L926.8,546.7 L933.7,512.0 L941.0,506.1 L947.9,528.5 L955.1,546.7 L962.4,544.4 L969.0,521.9 L976.3,508.7 L983.9,496.2 L990.8,475.7 L998.1,464.2 L1005.3,472.4 L1012.6,475.0 L1019.5,472.4 L1026.8,445.3 L1034.0,475.0 L1041.0,469.1 L1048.2,425.5 L1055.1,470.8 L1062.4,465.1 L1069.7,466.5 L1076.6,483.3 L1083.9,469.8 L1090.8,488.9 L1098.1,541.7 L1105.0,518.6 L1112.2,507.1 L1119.2,474.7 L1126.1,492.2 L1133.4,494.9 L1140.3,496.2 L1147.6,484.0 L1154.5,470.8 L1161.7,480.7 L1168.7,468.4 L1175.9,415.6 L1182.9,462.5 L1190.1,493.9 L1197.1,526.2 L1204.3,467.5 L1211.3,437.8 L1218.5,436.8 L1225.4,465.1 L1232.4,430.5 L1239.6,449.3 L1246.6,477.4 L1253.8,461.8 L1260.8,480.7 L1268.0,431.2 L1275.7,446.2 L1283.8,419.9 L1291.1,423.5 L1298.3,430.1 L1305.2,441.7 L1311.8,413.4 L1319.1,409.0 L1326.3,381.8 L1333.6,392.7 L1340.1,413.7 L1347.4,398.8 L1354.3,413.7 L1361.6,402.8 L1368.8,418.1 L1376.1,458.1 L1383.4,471.5 L1390.6,447.2 L1397.2,452.6 L1405.2,489.7 L1411.7,478.8 L1419.0,444.6 L1426.2,451.9 L1433.5,434.4 L1440.8,466.4 L1448.1,466.4 L1454.6,479.9 L1461.9,445.3 L1469.1,492.6 L1476.2,554.4 L1483.4,565.3 L1490.3,517.3 L1497.6,515.5 L1504.5,504.2 L1511.8,502.8 L1518.7,504.2 L1526.0,489.0 L1532.9,470.8 L1540.1,449.0 L1547.0,484.6 L1554.3,471.5 L1561.2,499.9 L1568.5,508.9 L1575.4,518.0 L1582.6,530.7 L1589.9,467.9 L1596.8,467.9 L1604.1,489.7 L1611.0,505.3 L1618.3,514.4 L1625.2,489.7 L1632.4,481.0 L1639.3,464.2 L1646.6,479.9 L1653.9,481.0 L1660.8,454.4 L1668.0,444.6 L1675.2,417.5 L1682.3,406.4 L1689.4,401.6 L1696.5,440.1 L1703.7,410.4 L1710.8,426.2 L1717.9,440.1 L1725.1,465.0 L1732.2,430.2 L1739.3,401.6 L1746.5,453.9 L1753.6,509.4 L1760.7,505.5 L1767.9,511.4 L1775.0,501.5 L1782.1,499.5 L1789.3,475.7 L1796.4,479.7 L1803.5,473.8 L1810.6,430.2 L1817.8,404.4 L1824.9,398.5 L1832.0,465.8 L1839.2,491.6 L1846.3,463.9 L1853.4,423.0 L1860.6,453.9 L1867.7,425.4 L1874.8,452.0 L1881.9,463.9 L1889.0,493.6 L1896.1,512.6 L1903.3,507.4 L1910.4,457.9 L1917.5,493.6 L1924.7,537.1 L1931.8,590.6 L1938.9,566.9 L1946.1,553.0 L1953.2,522.1 L1960.3,488.8 L1967.5,511.4 L1974.6,431.0 L1981.7,436.9 L1988.9,499.5 L1996.0,501.5 L2003.1,485.6 L2010.3,466.6 L2017.4,483.7 L2024.5,513.4 L2031.6,469.0 L2038.8,469.0 L2045.9,471.8 L2053.0,475.7 L2060.2,448.0 L2067.3,517.3 L2074.4,550.7 L2081.5,537.5 L2088.6,545.3 L2095.7,520.0 L2102.8,511.5 L2109.9,465.2 L2117.0,450.6 L2124.1,511.5 L2130.9,508.1 L2138.0,480.1 L2145.1,463.1 L2152.2,497.0 L2159.3,486.8 L2166.4,492.2 L2173.5,468.6 L2180.6,494.6 L2187.7,485.5 L2194.8,442.2 L2201.9,476.7 L2209.0,484.5 L2216.1,477.7 L2223.2,459.1 L2230.3,433.7 L2237.4,430.3 L2244.5,426.3 L2251.6,407.7 L2258.7,455.7 L2265.8,454.0 L2273.5,476.0 L2281.2,468.6 L2288.6,461.8 L2295.7,438.8 L2302.8,421.2 L2309.9,433.7 L2317.0,370.5 L2324.1,371.8 L2331.2,385.4 L2338.3,381.3 L2345.4,398.2 L2352.5,421.2 L2359.6,397.5 L2366.7,448.9 L2373.8,476.0 L2380.9,466.5 L2388.0,486.8 L2395.1,464.2 L2402.2,466.5 L2409.3,433.7 L2416.4,406.7 L2423.5,429.3 L2430.6,409.0 L2437.7,414.5 L2444.8,414.5 L2451.9,420.2 L2459.0,415.8 L2466.1,401.6 L2473.7,449.2 L2481.2,464.9 L2488.2,482.3 L2495.2,464.9 L2502.3,487.3 L2509.3,473.3 L2516.3,442.4 L2523.3,409.3 L2530.3,410.7 L2537.3,478.9 L2545.2,532.2 L2552.7,586.9 L2559.8,602.3 L2566.8,563.1 L2573.8,468.2 L2580.8,519.6 L2587.8,549.0 L2594.8,578.5 L2601.8,593.9 L2608.8,593.4 L2615.9,610.7 L2623.7,627.6 L2630.7,650.0 L2637.7,657.0 L2644.8,628.1 L2651.8,636.0 L2658.8,647.8 L2665.8,577.1 L2673.4,588.3 L2680.4,526.6 L2687.4,494.3 L2694.4,424.2 L2701.4,358.8 L2708.4,391.7 L2715.4,451.4 L2722.8,486.8 L2729.9,547.6 L2737.0,585.5 L2744.1,630.9 L2751.2,648.6 L2758.3,643.8 L2765.4,610.7 L2772.5,593.9 L2779.6,528.0 L2786.7,494.3 L2793.8,488.7 L2800.9,453.7 L2808.0,432.6 L2815.4,462.1 L2822.5,417.8 L2829.6,424.2 L2836.7,411.6 L2843.8,433.5 L2850.9,407.7 L2858.0,452.0 L2865.1,455.1 L2872.2,391.7 L2879.7,332.2 L2887.4,367.1 L2894.3,439.9 L2901.5,494.5 L2908.8,551.1 L2915.7,609.7 L2923.0,636.0 L2929.8,603.6 L2937.1,562.4 L2944.4,555.1 L2951.3,520.8 L2958.1,494.5 L2965.4,470.2 L2972.7,472.2 L2980.0,462.1 L2987.2,421.7 L2994.5,382.1 L3001.4,386.1 L3008.7,408.8 L3015.5,437.1 L3022.8,437.9 L3030.1,411.6 L3037.0,402.3 L3043.8,412.8 L3051.1,414.4 L3057.9,419.2 L3065.4,450.3 L3072.4,463.2 L3079.3,457.6 L3086.6,455.2 L3094.0,463.2 L3101.1,478.0 L3108.4,497.8 L3115.3,493.9 L3122.9,520.6 L3129.8,523.0 L3136.1,509.7 L3144.1,488.5 L3151.0,484.0 L3157.9,496.8 L3164.9,477.4 L3172.4,525.5 L3179.7,509.7 L3186.6,545.3 L3194.2,545.3 L3200.9,529.5 L3208.4,553.9 L3215.3,536.4 L3222.3,520.2" fill="none" stroke="#e0ba58" stroke-width="2.2" stroke-linejoin="round" /><path d="M96.2,1293.6 L96.2,638.6 L100.3,634.5 L107.3,638.6 L114.8,632.4 L122.2,637.8 L129.2,637.8 L136.2,631.2 L142.8,631.6 L150.2,626.2 L157.2,627.9 L164.3,624.6 L171.3,627.0 L178.7,640.2 L185.7,637.8 L192.3,638.2 L199.3,622.9 L207.2,600.2 L213.8,609.7 L221.2,600.2 L228.2,593.2 L235.2,592.0 L242.6,585.0 L249.7,585.8 L257.1,573.4 L263.3,577.5 L271.5,568.4 L278.5,566.0 L286.0,558.1 L292.1,557.7 L300.4,545.3 L307.4,544.5 L314.8,545.3 L321.8,549.5 L328.0,551.5 L335.5,558.1 L342.5,556.1 L349.1,557.3 L356.1,551.1 L363.5,558.1 L370.5,545.3 L377.5,540.4 L384.6,548.6 L392.0,545.3 L399.4,561.0 L406.8,556.1 L413.8,547.4 L420.9,540.4 L428.3,545.3 L435.7,538.3 L442.7,523.9 L449.7,522.7 L457.2,520.6 L464.2,516.9 L470.4,516.1 L477.8,521.0 L484.5,525.1 L492.4,516.1 L499.8,520.6 L507.2,518.1 L514.2,511.2 L521.1,512.2 L528.0,498.8 L535.4,504.8 L542.4,507.2 L549.3,501.3 L556.7,497.8 L563.7,495.3 L570.6,490.9 L577.5,487.9 L585.0,475.0 L591.9,476.5 L598.8,489.4 L606.2,465.1 L613.7,471.1 L621.1,491.4 L628.5,517.1 L635.4,540.9 L642.4,556.7 L649.8,550.8 L656.7,542.9 L663.7,543.9 L671.1,527.0 L678.0,510.7 L685.0,514.2 L691.9,522.1 L698.8,514.2 L706.2,508.7 L713.2,504.8 L720.6,489.9 L727.5,482.5 L734.5,485.9 L741.9,490.9 L748.8,492.9 L755.7,470.1 L762.7,467.6 L770.1,471.1 L777.0,457.7 L784.0,477.5 L791.4,483.5 L798.3,489.9 L805.7,503.3 L812.7,503.8 L819.6,503.3 L827.5,508.2 L834.5,513.2 L841.4,514.7 L848.8,512.2 L855.2,497.3 L862.2,480.0 L869.1,475.0 L876.0,457.7 L884.2,475.7 L891.1,500.5 L898.4,523.6 L905.3,532.5 L912.2,537.1 L919.5,531.8 L926.8,521.3 L933.7,518.0 L941.0,511.4 L947.9,523.6 L955.1,529.2 L962.4,530.2 L969.0,525.2 L976.3,517.0 L983.9,509.4 L990.8,508.1 L998.1,496.2 L1005.3,497.2 L1012.6,497.2 L1019.5,492.2 L1026.8,484.0 L1034.0,483.6 L1041.0,484.6 L1048.2,468.4 L1055.1,483.0 L1062.4,480.0 L1069.7,478.0 L1076.6,478.0 L1083.9,478.3 L1090.8,485.0 L1098.1,502.1 L1105.0,498.2 L1112.2,492.9 L1119.2,485.0 L1126.1,490.6 L1133.4,492.2 L1140.3,493.2 L1147.6,488.9 L1154.5,485.6 L1161.7,487.3 L1168.7,485.0 L1175.9,456.9 L1182.9,475.7 L1190.1,487.3 L1197.1,494.2 L1204.3,480.7 L1211.3,468.4 L1218.5,467.5 L1225.4,473.1 L1232.4,465.1 L1239.6,460.2 L1246.6,472.4 L1253.8,470.8 L1260.8,475.0 L1268.0,455.2 L1275.7,461.3 L1283.8,448.3 L1291.1,445.3 L1298.3,447.2 L1305.2,450.8 L1311.8,441.7 L1319.1,435.2 L1326.3,424.3 L1333.6,427.2 L1340.1,427.2 L1347.4,424.6 L1354.3,422.5 L1361.6,421.0 L1368.8,427.2 L1376.1,437.4 L1383.4,446.4 L1390.6,441.0 L1397.2,441.0 L1405.2,457.0 L1411.7,449.7 L1419.0,441.7 L1426.2,444.6 L1433.5,443.5 L1440.8,455.5 L1448.1,453.3 L1454.6,461.0 L1461.9,453.3 L1469.1,467.2 L1476.2,491.9 L1483.4,496.2 L1490.3,485.3 L1497.6,489.7 L1504.5,487.1 L1511.8,484.6 L1518.7,488.2 L1526.0,485.3 L1532.9,478.1 L1540.1,471.5 L1547.0,481.0 L1554.3,478.1 L1561.2,489.7 L1568.5,489.0 L1575.4,496.2 L1582.6,501.7 L1589.9,485.3 L1596.8,482.8 L1604.1,486.0 L1611.0,487.9 L1618.3,496.2 L1625.2,487.1 L1632.4,482.4 L1639.3,481.7 L1646.6,484.6 L1653.9,488.2 L1660.8,478.1 L1668.0,472.6 L1675.2,463.1 L1682.3,455.9 L1689.4,450.0 L1696.5,459.9 L1703.7,448.0 L1710.8,446.0 L1717.9,450.0 L1725.1,458.7 L1732.2,452.0 L1739.3,438.9 L1746.5,455.9 L1753.6,469.8 L1760.7,475.7 L1767.9,475.7 L1775.0,475.7 L1782.1,479.7 L1789.3,473.0 L1796.4,473.8 L1803.5,469.0 L1810.6,453.9 L1817.8,438.1 L1824.9,434.1 L1832.0,459.9 L1839.2,470.6 L1846.3,458.7 L1853.4,446.0 L1860.6,455.9 L1867.7,449.2 L1874.8,455.9 L1881.9,459.9 L1889.0,473.8 L1896.1,475.7 L1903.3,475.7 L1910.4,462.7 L1917.5,477.7 L1924.7,497.5 L1931.8,513.4 L1938.9,513.4 L1946.1,508.6 L1953.2,501.5 L1960.3,493.6 L1967.5,499.5 L1974.6,477.7 L1981.7,473.8 L1988.9,492.8 L1996.0,491.6 L2003.1,487.6 L2010.3,481.7 L2017.4,488.8 L2024.5,495.5 L2031.6,482.5 L2038.8,479.7 L2045.9,483.7 L2053.0,479.7 L2060.2,467.8 L2067.3,495.5 L2074.4,509.3 L2081.5,503.7 L2088.6,513.9 L2095.7,505.1 L2102.8,504.7 L2109.9,491.2 L2117.0,482.8 L2124.1,498.0 L2130.9,497.0 L2138.0,492.2 L2145.1,489.5 L2152.2,495.6 L2159.3,486.8 L2166.4,486.8 L2173.5,483.4 L2180.6,489.5 L2187.7,499.0 L2194.8,475.3 L2201.9,485.5 L2209.0,482.1 L2216.1,480.1 L2223.2,472.6 L2230.3,463.1 L2237.4,461.8 L2244.5,453.0 L2251.6,446.2 L2258.7,461.8 L2265.8,459.8 L2273.5,467.5 L2281.2,462.5 L2288.6,459.8 L2295.7,455.7 L2302.8,448.3 L2309.9,448.9 L2317.0,433.7 L2324.1,424.6 L2331.2,422.9 L2338.3,421.2 L2345.4,425.9 L2352.5,428.7 L2359.6,417.8 L2366.7,438.1 L2373.8,443.9 L2380.9,441.5 L2388.0,448.9 L2395.1,451.7 L2402.2,454.0 L2409.3,436.1 L2416.4,428.0 L2423.5,432.7 L2430.6,428.0 L2437.7,425.3 L2444.8,424.6 L2451.9,429.3 L2459.0,424.6 L2466.1,419.2 L2473.7,436.0 L2481.2,444.7 L2488.2,446.6 L2495.2,448.1 L2502.3,453.1 L2509.3,448.1 L2516.3,443.8 L2523.3,431.2 L2530.3,428.4 L2537.3,456.5 L2545.2,476.1 L2552.7,497.1 L2559.8,510.3 L2566.8,501.3 L2573.8,480.3 L2580.8,495.7 L2587.8,509.2 L2594.8,521.0 L2601.8,530.0 L2608.8,537.8 L2615.9,544.8 L2623.7,556.0 L2630.7,572.9 L2637.7,579.3 L2644.8,579.3 L2651.8,584.9 L2658.8,590.5 L2665.8,573.7 L2673.4,575.7 L2680.4,558.8 L2687.4,543.4 L2694.4,516.8 L2701.4,484.5 L2708.4,484.5 L2715.4,497.1 L2722.8,509.8 L2729.9,526.6 L2737.0,541.2 L2744.1,557.4 L2751.2,573.7 L2758.3,577.6 L2765.4,575.7 L2772.5,568.7 L2779.6,554.1 L2786.7,539.2 L2793.8,530.0 L2800.9,515.4 L2808.0,502.7 L2815.4,501.9 L2822.5,490.1 L2829.6,484.0 L2836.7,476.1 L2843.8,476.1 L2850.9,471.9 L2858.0,472.7 L2865.1,475.0 L2872.2,455.1 L2879.7,424.4 L2887.4,439.9 L2894.3,458.1 L2901.5,478.3 L2908.8,498.5 L2915.7,516.7 L2923.0,534.1 L2929.8,534.1 L2937.1,524.8 L2944.4,520.8 L2951.3,511.5 L2958.1,502.6 L2965.4,493.7 L2972.7,492.5 L2980.0,487.2 L2987.2,473.5 L2994.5,452.0 L3001.4,443.9 L3008.7,449.2 L3015.5,458.1 L3022.8,450.8 L3030.1,443.9 L3037.0,437.9 L3043.8,437.1 L3051.1,436.7 L3057.9,435.0 L3065.4,448.9 L3072.4,450.9 L3079.3,450.9 L3086.6,447.7 L3094.0,450.3 L3101.1,457.2 L3108.4,464.2 L3115.3,467.5 L3122.9,478.0 L3129.8,481.0 L3136.1,483.4 L3144.1,476.0 L3151.0,477.4 L3157.9,480.6 L3164.9,476.6 L3172.4,489.9 L3179.7,494.5 L3186.6,499.8 L3194.2,504.8 L3200.9,505.7 L3208.4,511.1 L3215.3,510.3 L3222.3,509.1 L3222.3,1293.6 Z" fill="#80cbd8" fill-opacity="0.2" /><path d="M96.2,638.6 L100.3,634.5 L107.3,638.6 L114.8,632.4 L122.2,637.8 L129.2,637.8 L136.2,631.2 L142.8,631.6 L150.2,626.2 L157.2,627.9 L164.3,624.6 L171.3,627.0 L178.7,640.2 L185.7,637.8 L192.3,638.2 L199.3,622.9 L207.2,600.2 L213.8,609.7 L221.2,600.2 L228.2,593.2 L235.2,592.0 L242.6,585.0 L249.7,585.8 L257.1,573.4 L263.3,577.5 L271.5,568.4 L278.5,566.0 L286.0,558.1 L292.1,557.7 L300.4,545.3 L307.4,544.5 L314.8,545.3 L321.8,549.5 L328.0,551.5 L335.5,558.1 L342.5,556.1 L349.1,557.3 L356.1,551.1 L363.5,558.1 L370.5,545.3 L377.5,540.4 L384.6,548.6 L392.0,545.3 L399.4,561.0 L406.8,556.1 L413.8,547.4 L420.9,540.4 L428.3,545.3 L435.7,538.3 L442.7,523.9 L449.7,522.7 L457.2,520.6 L464.2,516.9 L470.4,516.1 L477.8,521.0 L484.5,525.1 L492.4,516.1 L499.8,520.6 L507.2,518.1 L514.2,511.2 L521.1,512.2 L528.0,498.8 L535.4,504.8 L542.4,507.2 L549.3,501.3 L556.7,497.8 L563.7,495.3 L570.6,490.9 L577.5,487.9 L585.0,475.0 L591.9,476.5 L598.8,489.4 L606.2,465.1 L613.7,471.1 L621.1,491.4 L628.5,517.1 L635.4,540.9 L642.4,556.7 L649.8,550.8 L656.7,542.9 L663.7,543.9 L671.1,527.0 L678.0,510.7 L685.0,514.2 L691.9,522.1 L698.8,514.2 L706.2,508.7 L713.2,504.8 L720.6,489.9 L727.5,482.5 L734.5,485.9 L741.9,490.9 L748.8,492.9 L755.7,470.1 L762.7,467.6 L770.1,471.1 L777.0,457.7 L784.0,477.5 L791.4,483.5 L798.3,489.9 L805.7,503.3 L812.7,503.8 L819.6,503.3 L827.5,508.2 L834.5,513.2 L841.4,514.7 L848.8,512.2 L855.2,497.3 L862.2,480.0 L869.1,475.0 L876.0,457.7 L884.2,475.7 L891.1,500.5 L898.4,523.6 L905.3,532.5 L912.2,537.1 L919.5,531.8 L926.8,521.3 L933.7,518.0 L941.0,511.4 L947.9,523.6 L955.1,529.2 L962.4,530.2 L969.0,525.2 L976.3,517.0 L983.9,509.4 L990.8,508.1 L998.1,496.2 L1005.3,497.2 L1012.6,497.2 L1019.5,492.2 L1026.8,484.0 L1034.0,483.6 L1041.0,484.6 L1048.2,468.4 L1055.1,483.0 L1062.4,480.0 L1069.7,478.0 L1076.6,478.0 L1083.9,478.3 L1090.8,485.0 L1098.1,502.1 L1105.0,498.2 L1112.2,492.9 L1119.2,485.0 L1126.1,490.6 L1133.4,492.2 L1140.3,493.2 L1147.6,488.9 L1154.5,485.6 L1161.7,487.3 L1168.7,485.0 L1175.9,456.9 L1182.9,475.7 L1190.1,487.3 L1197.1,494.2 L1204.3,480.7 L1211.3,468.4 L1218.5,467.5 L1225.4,473.1 L1232.4,465.1 L1239.6,460.2 L1246.6,472.4 L1253.8,470.8 L1260.8,475.0 L1268.0,455.2 L1275.7,461.3 L1283.8,448.3 L1291.1,445.3 L1298.3,447.2 L1305.2,450.8 L1311.8,441.7 L1319.1,435.2 L1326.3,424.3 L1333.6,427.2 L1340.1,427.2 L1347.4,424.6 L1354.3,422.5 L1361.6,421.0 L1368.8,427.2 L1376.1,437.4 L1383.4,446.4 L1390.6,441.0 L1397.2,441.0 L1405.2,457.0 L1411.7,449.7 L1419.0,441.7 L1426.2,444.6 L1433.5,443.5 L1440.8,455.5 L1448.1,453.3 L1454.6,461.0 L1461.9,453.3 L1469.1,467.2 L1476.2,491.9 L1483.4,496.2 L1490.3,485.3 L1497.6,489.7 L1504.5,487.1 L1511.8,484.6 L1518.7,488.2 L1526.0,485.3 L1532.9,478.1 L1540.1,471.5 L1547.0,481.0 L1554.3,478.1 L1561.2,489.7 L1568.5,489.0 L1575.4,496.2 L1582.6,501.7 L1589.9,485.3 L1596.8,482.8 L1604.1,486.0 L1611.0,487.9 L1618.3,496.2 L1625.2,487.1 L1632.4,482.4 L1639.3,481.7 L1646.6,484.6 L1653.9,488.2 L1660.8,478.1 L1668.0,472.6 L1675.2,463.1 L1682.3,455.9 L1689.4,450.0 L1696.5,459.9 L1703.7,448.0 L1710.8,446.0 L1717.9,450.0 L1725.1,458.7 L1732.2,452.0 L1739.3,438.9 L1746.5,455.9 L1753.6,469.8 L1760.7,475.7 L1767.9,475.7 L1775.0,475.7 L1782.1,479.7 L1789.3,473.0 L1796.4,473.8 L1803.5,469.0 L1810.6,453.9 L1817.8,438.1 L1824.9,434.1 L1832.0,459.9 L1839.2,470.6 L1846.3,458.7 L1853.4,446.0 L1860.6,455.9 L1867.7,449.2 L1874.8,455.9 L1881.9,459.9 L1889.0,473.8 L1896.1,475.7 L1903.3,475.7 L1910.4,462.7 L1917.5,477.7 L1924.7,497.5 L1931.8,513.4 L1938.9,513.4 L1946.1,508.6 L1953.2,501.5 L1960.3,493.6 L1967.5,499.5 L1974.6,477.7 L1981.7,473.8 L1988.9,492.8 L1996.0,491.6 L2003.1,487.6 L2010.3,481.7 L2017.4,488.8 L2024.5,495.5 L2031.6,482.5 L2038.8,479.7 L2045.9,483.7 L2053.0,479.7 L2060.2,467.8 L2067.3,495.5 L2074.4,509.3 L2081.5,503.7 L2088.6,513.9 L2095.7,505.1 L2102.8,504.7 L2109.9,491.2 L2117.0,482.8 L2124.1,498.0 L2130.9,497.0 L2138.0,492.2 L2145.1,489.5 L2152.2,495.6 L2159.3,486.8 L2166.4,486.8 L2173.5,483.4 L2180.6,489.5 L2187.7,499.0 L2194.8,475.3 L2201.9,485.5 L2209.0,482.1 L2216.1,480.1 L2223.2,472.6 L2230.3,463.1 L2237.4,461.8 L2244.5,453.0 L2251.6,446.2 L2258.7,461.8 L2265.8,459.8 L2273.5,467.5 L2281.2,462.5 L2288.6,459.8 L2295.7,455.7 L2302.8,448.3 L2309.9,448.9 L2317.0,433.7 L2324.1,424.6 L2331.2,422.9 L2338.3,421.2 L2345.4,425.9 L2352.5,428.7 L2359.6,417.8 L2366.7,438.1 L2373.8,443.9 L2380.9,441.5 L2388.0,448.9 L2395.1,451.7 L2402.2,454.0 L2409.3,436.1 L2416.4,428.0 L2423.5,432.7 L2430.6,428.0 L2437.7,425.3 L2444.8,424.6 L2451.9,429.3 L2459.0,424.6 L2466.1,419.2 L2473.7,436.0 L2481.2,444.7 L2488.2,446.6 L2495.2,448.1 L2502.3,453.1 L2509.3,448.1 L2516.3,443.8 L2523.3,431.2 L2530.3,428.4 L2537.3,456.5 L2545.2,476.1 L2552.7,497.1 L2559.8,510.3 L2566.8,501.3 L2573.8,480.3 L2580.8,495.7 L2587.8,509.2 L2594.8,521.0 L2601.8,530.0 L2608.8,537.8 L2615.9,544.8 L2623.7,556.0 L2630.7,572.9 L2637.7,579.3 L2644.8,579.3 L2651.8,584.9 L2658.8,590.5 L2665.8,573.7 L2673.4,575.7 L2680.4,558.8 L2687.4,543.4 L2694.4,516.8 L2701.4,484.5 L2708.4,484.5 L2715.4,497.1 L2722.8,509.8 L2729.9,526.6 L2737.0,541.2 L2744.1,557.4 L2751.2,573.7 L2758.3,577.6 L2765.4,575.7 L2772.5,568.7 L2779.6,554.1 L2786.7,539.2 L2793.8,530.0 L2800.9,515.4 L2808.0,502.7 L2815.4,501.9 L2822.5,490.1 L2829.6,484.0 L2836.7,476.1 L2843.8,476.1 L2850.9,471.9 L2858.0,472.7 L2865.1,475.0 L2872.2,455.1 L2879.7,424.4 L2887.4,439.9 L2894.3,458.1 L2901.5,478.3 L2908.8,498.5 L2915.7,516.7 L2923.0,534.1 L2929.8,534.1 L2937.1,524.8 L2944.4,520.8 L2951.3,511.5 L2958.1,502.6 L2965.4,493.7 L2972.7,492.5 L2980.0,487.2 L2987.2,473.5 L2994.5,452.0 L3001.4,443.9 L3008.7,449.2 L3015.5,458.1 L3022.8,450.8 L3030.1,443.9 L3037.0,437.9 L3043.8,437.1 L3051.1,436.7 L3057.9,435.0 L3065.4,448.9 L3072.4,450.9 L3079.3,450.9 L3086.6,447.7 L3094.0,450.3 L3101.1,457.2 L3108.4,464.2 L3115.3,467.5 L3122.9,478.0 L3129.8,481.0 L3136.1,483.4 L3144.1,476.0 L3151.0,477.4 L3157.9,480.6 L3164.9,476.6 L3172.4,489.9 L3179.7,494.5 L3186.6,499.8 L3194.2,504.8 L3200.9,505.7 L3208.4,511.1 L3215.3,510.3 L3222.3,509.1" fill="none" stroke="#80cbd8" stroke-width="2.2" stroke-linejoin="round" /></g>
</svg>
<div class="yl" style="top:1279.1px">0</div><div class="yl" style="top:1171.3px">1</div><div class="yl" style="top:1064.0px">2</div><div class="yl" style="top:956.5px">3</div><div class="yl" style="top:848.8px">4</div><div class="yl" style="top:740.7px">5</div><div class="yl" style="top:634.7px">6</div><div class="yl" style="top:526.6px">7</div><div class="yl" style="top:420.1px">8</div><div class="yl" style="top:312.5px">9</div><div class="yl" style="top:204.4px">10</div><div class="yl" style="top:97.0px">11</div><div class="xl" style="left:104.3px">15:00</div><div class="xl" style="left:264.7px">15:30</div><div class="xl" style="left:425.0px">16:00</div><div class="xl" style="left:585.4px">16:30</div><div class="xl" style="left:745.8px">17:00</div><div class="xl" style="left:906.2px">17:30</div><div class="xl" style="left:1066.5px">18:00</div><div class="xl" style="left:1226.9px">18:30</div><div class="xl" style="left:1387.3px">19:00</div><div class="xl" style="left:1547.6px">19:30</div><div class="xl" style="left:1708.0px">20:00</div><div class="xl" style="left:1868.4px">20:30</div><div class="xl" style="left:2028.8px">21:00</div><div class="xl" style="left:2189.1px">21:30</div><div class="xl" style="left:2349.5px">22:00</div><div class="xl" style="left:2509.9px">22:30</div><div class="xl" style="left:2670.3px">23:00</div><div class="xl" style="left:2830.6px">23:30</div><div class="xl" style="left:2991.0px">00:00</div><div class="xl" style="left:3151.4px">00:30</div>
<div id="ylab">counter</div>
<div class="lh" style="left:2766px"><span style="display:inline-block;transform:scaleX(0.915);transform-origin:100% 50%">min</span></div><div class="lh" style="left:2847.5px"><span style="display:inline-block;transform:scaleX(0.915);transform-origin:100% 50%">max</span></div><div class="lh" style="left:2930px"><span style="display:inline-block;transform:scaleX(0.915);transform-origin:100% 50%">avg</span></div><div class="lh" style="left:3028px"><span style="display:inline-block;transform:scaleX(0.915);transform-origin:100% 50%">current</span></div><div class="li" style="top:1412px;background:#88b173"></div><div class="ln" style="top:1388px">Load 1m</div><div class="lv" style="top:1388px;left:2781px">4.64</div><div class="lv" style="top:1388px;left:2863px">10.6</div><div class="lv" style="top:1388px;left:2945px">7.49</div><div class="lv" style="top:1388px;left:3043px">7.53</div><div style="position:absolute;left:26px;top:1440px;width:3222px;height:52px;background:#222328"></div><div class="li" style="top:1464px;background:#e0ba58"></div><div class="ln" style="top:1440px">Load 5m</div><div class="lv" style="top:1440px;left:2781px">5.90</div><div class="lv" style="top:1440px;left:2863px">8.96</div><div class="lv" style="top:1440px;left:2945px">7.46</div><div class="lv" style="top:1440px;left:3043px">7.20</div><div class="li" style="top:1516px;background:#80cbd8"></div><div class="ln" style="top:1492px">Load 15m</div><div class="lv" style="top:1492px;left:2781px">6.06</div><div class="lv" style="top:1492px;left:2863px">8.16</div><div class="lv" style="top:1492px;left:2945px">7.44</div><div class="lv" style="top:1492px;left:3043px">7.30</div>
</body></html>
